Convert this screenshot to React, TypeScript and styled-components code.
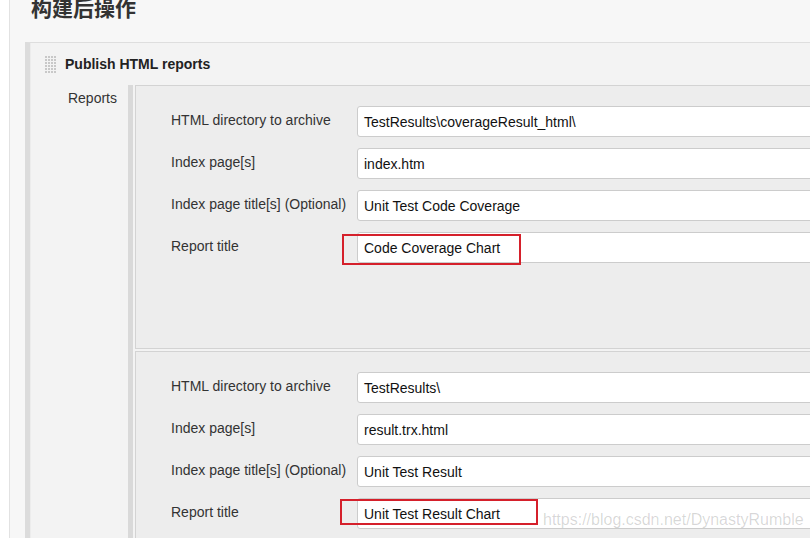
import React from "react";
import styled, { createGlobalStyle } from "styled-components";

const Global = createGlobalStyle`
  html, body { margin: 0; padding: 0; overflow: hidden; background: #fff; }
  body { font-family: "Liberation Sans", Arial, sans-serif; }
`;

const Page = styled.div`
  position: relative;
  display: flex;
  width: 810px;
  height: 538px;
  overflow: hidden;
  background: #fff;
`;

const Gutter = styled.div`
  flex: 0 0 9px;
  background: #fff;
  border-right: 1px solid #e2e2e2;
`;

const Main = styled.div`
  flex: 1;
  min-width: 0;
  background: #f7f7f7;
  padding-left: 15px;
`;

const Heading = styled.h2`
  margin: -3px 0 0 6px;
  font-family: "Noto Sans CJK SC", "Liberation Sans", sans-serif;
  font-weight: 700;
  font-size: 21px;
  line-height: 21px;
  color: #333;
`;

const Step = styled.section`
  margin-top: 24px;
  border-top: 1px solid #dedede;
  border-left: 5px solid #dcdcdc;
  width: 1000px;
`;

const StepBody = styled.div`
  border-left: 1px solid #ececec;
  background: #f3f3f3;
`;

const StepHeader = styled.div`
  display: flex;
  align-items: center;
  gap: 8px;
  height: 42px;
  padding-left: 14px;
`;

const StepTitle = styled.span`
  font-weight: 700;
  font-size: 14px;
  color: #222;
`;

const FieldRow = styled.div`
  display: flex;
`;

const FieldName = styled.div`
  flex: 0 0 97px;
  box-sizing: border-box;
  text-align: right;
  padding: 5px 11px 0 0;
  font-size: 14px;
  line-height: 17px;
  color: #333;
`;

const RepeatList = styled.div`
  flex: 1;
  border-left: 5px solid #d9d9d9;
  padding-left: 2px;
  display: flex;
  flex-direction: column;
  gap: 2px;
`;

const Chunk = styled.div<{ $bottom: number }>`
  border: 1px solid #d3d3d3;
  background: #ededed;
  padding: 20px 0 ${(p) => p.$bottom}px 35px;
  display: flex;
  flex-direction: column;
  gap: 11px;
`;

const Row = styled.div`
  display: grid;
  grid-template-columns: 186px 640px;
  align-items: start;
`;

const Label = styled.label`
  padding-top: 6px;
  font-size: 14px;
  line-height: 17px;
  color: #333;
`;

const InputWrap = styled.div`
  position: relative;
`;

const TextInput = styled.div`
  box-sizing: border-box;
  height: 31px;
  border: 1px solid #cccccc;
  border-radius: 3px;
  background: #fff;
  padding: 0 6px;
  font-size: 14px;
  line-height: 30px;
  color: #111;
  white-space: nowrap;
`;

const Highlight = styled.div<{ $l: number; $t: number; $w: number; $h: number }>`
  position: absolute;
  left: ${(p) => p.$l}px;
  top: ${(p) => p.$t}px;
  width: ${(p) => p.$w}px;
  height: ${(p) => p.$h}px;
  box-sizing: border-box;
  border: 2px solid #d5202b;
  pointer-events: none;
`;

const Watermark = styled.div`
  position: absolute;
  left: 543px;
  top: 510px;
  font-size: 16px;
  line-height: 20px;
  color: rgba(0, 0, 0, 0.16);
  white-space: nowrap;
`;

const Handle = () => (
  <svg width="12" height="17" viewBox="0 0 12 17">
    {Array.from({ length: 6 }).map((_, r) =>
      Array.from({ length: 4 }).map((_, c) => (
        <rect key={`${r}-${c}`} x={c * 3} y={r * 3} width="2" height="2" fill="#c8c8c8" />
      ))
    )}
  </svg>
);

type Field = { label: string; value: string };
type Report = {
  fields: Field[];
  bottom: number;
  hl: { l: number; t: number; w: number; h: number };
};

const reports: Report[] = [
  {
    fields: [
      { label: "HTML directory to archive", value: "TestResults\\coverageResult_html\\" },
      { label: "Index page[s]", value: "index.htm" },
      { label: "Index page title[s] (Optional)", value: "Unit Test Code Coverage" },
      { label: "Report title", value: "Code Coverage Chart" },
    ],
    bottom: 85,
    hl: { l: -15, t: 2, w: 179, h: 31 },
  },
  {
    fields: [
      { label: "HTML directory to archive", value: "TestResults\\" },
      { label: "Index page[s]", value: "result.trx.html" },
      { label: "Index page title[s] (Optional)", value: "Unit Test Result" },
      { label: "Report title", value: "Unit Test Result Chart" },
    ],
    bottom: 85,
    hl: { l: -17, t: 1, w: 198, h: 26 },
  },
];

export default function App() {
  return (
    <>
      <Global />
      <Page>
        <Gutter />
        <Main>
          <Heading>构建后操作</Heading>
          <Step>
            <StepBody>
              <StepHeader>
                <Handle />
                <StepTitle>Publish HTML reports</StepTitle>
              </StepHeader>
              <FieldRow>
                <FieldName>Reports</FieldName>
                <RepeatList>
                  {reports.map((rep, i) => (
                    <Chunk key={i} $bottom={rep.bottom}>
                      {rep.fields.map((f, j) => (
                        <Row key={j}>
                          <Label>{f.label}</Label>
                          <InputWrap>
                            <TextInput>{f.value}</TextInput>
                            {j === rep.fields.length - 1 && (
                              <Highlight $l={rep.hl.l} $t={rep.hl.t} $w={rep.hl.w} $h={rep.hl.h} />
                            )}
                          </InputWrap>
                        </Row>
                      ))}
                    </Chunk>
                  ))}
                </RepeatList>
              </FieldRow>
            </StepBody>
          </Step>
        </Main>
        <Watermark>https://blog.csdn.net/DynastyRumble</Watermark>
      </Page>
    </>
  );
}
